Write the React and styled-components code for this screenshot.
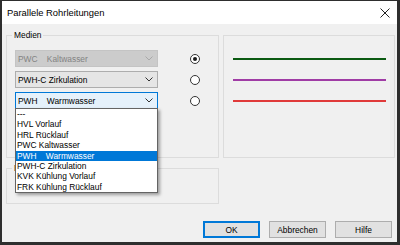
import React from 'react'
import styled, { createGlobalStyle } from 'styled-components'

const GlobalStyle = createGlobalStyle`
    html, body {
        margin:0;
        padding:0;
        background:#f0f0f0;
    }
    body {
        font-family:"Liberation Sans", Arial, sans-serif;
        font-size:8.4px;
        color:#000;
    }
`

const media = ['---', 'HVL Vorlauf', 'HRL Rücklauf', 'PWC Kaltwasser', 'PWH    Warmwasser', 'PWH-C Zirkulation', 'KVK Kühlung Vorlauf', 'FRK Kühlung Rücklauf']

const rows = [
    { label: 'PWC    Kaltwasser', state: 'disabled', checked: true, color: '#0b5a12' },
    { label: 'PWH-C Zirkulation', state: 'normal', checked: false, color: '#a03ca5' },
    { label: 'PWH    Warmwasser', state: 'focus', checked: false, color: '#e03a3a', open: true },
]

function Chevron({ color }) {
    return (
        <svg width="8" height="5" viewBox="0 0 8 5">
            <path d="M0.5 0.5 L4 4 L7.5 0.5" fill="none" stroke={color} strokeWidth="1" />
        </svg>
    )
}

function App() {
    return (
        <>
            <GlobalStyle />
            <Window>
                <TitleBar>
                    <Title>Parallele Rohrleitungen</Title>
                    <CloseBtn>
                        <svg width="10" height="10" viewBox="0 0 10 10">
                            <path d="M0.5 0.5 L9.5 9.5 M9.5 0.5 L0.5 9.5" stroke="#222" strokeWidth="1" />
                        </svg>
                    </CloseBtn>
                </TitleBar>
                <Body>
                    <TopRow>
                        <GroupBox>
                            <GroupLabel>Medien</GroupLabel>
                            <Rows>
                                {rows.map((r) => (
                                    <MediaRow key={r.label}>
                                        <ComboWrap>
                                            <Combo state={r.state}>
                                                <ComboText>{r.label}</ComboText>
                                                <Chevron color={r.state === 'disabled' ? '#a8a8a8' : '#333'} />
                                            </Combo>
                                            {r.open && (
                                                <DropList>
                                                    {media.map((m) => (
                                                        <DropItem key={m} selected={m.startsWith('PWH ')}>{m}</DropItem>
                                                    ))}
                                                </DropList>
                                            )}
                                        </ComboWrap>
                                        <Radio checked={r.checked} />
                                    </MediaRow>
                                ))}
                            </Rows>
                        </GroupBox>
                        <Preview>
                            <Rows>
                                {rows.map((r) => (
                                    <LineRow key={r.color}>
                                        <PipeLine color={r.color} />
                                    </LineRow>
                                ))}
                            </Rows>
                        </Preview>
                    </TopRow>
                    <SecondBox>
                        <GroupLabel>E</GroupLabel>
                    </SecondBox>
                    <Footer>
                        <Button primary>OK</Button>
                        <Button>Abbrechen</Button>
                        <Button>Hilfe</Button>
                    </Footer>
                </Body>
            </Window>
        </>
    )
}

const Window = styled.div`
    width:400px;
    height:245px;
    box-sizing:border-box;
    border-style:solid;
    border-color:#2e2e2e;
    border-width:1px 3px 3px 2px;
    background:#f0f0f0;
    display:flex;
    flex-direction:column;
`

const TitleBar = styled.div`
    height:23px;
    background:#fff;
    display:flex;
    align-items:center;
    justify-content:space-between;
    padding:0 5px 0 5px;
`

const Title = styled.div`
    font-size:9.4px;
    color:#000;
`

const CloseBtn = styled.div`
    width:10px;
    height:10px;
    display:flex;
    margin-right:2px;
`

const Body = styled.div`
    flex:1;
    padding:11px 2px 0 4px;
    display:flex;
    flex-direction:column;
`

const TopRow = styled.div`
    display:flex;
    gap:4px;
    height:123px;
`

const GroupBox = styled.div`
    position:relative;
    width:213px;
    box-sizing:border-box;
    border:1px solid #dcdcdc;
    padding:14px 0 0 8px;
`

const GroupLabel = styled.span`
    position:absolute;
    top:-6px;
    left:5px;
    padding:0 2px;
    background:#f0f0f0;
    line-height:11px;
    color:#000;
`

const Rows = styled.div`
    display:flex;
    flex-direction:column;
    gap:4px;
`

const MediaRow = styled.div`
    display:flex;
    align-items:center;
    gap:32px;
    height:17px;
`

const ComboWrap = styled.div`
    position:relative;
    width:143px;
    height:17px;
`

const comboColors = {
    disabled: { bg: '#cccccc', border: '#c4c4c4', text: '#838383' },
    normal: { bg: '#e5e5e5', border: '#adadad', text: '#000' },
    focus: { bg: '#e5f1fb', border: '#0078d7', text: '#000' },
}

const Combo = styled.div`
    height:100%;
    box-sizing:border-box;
    border:1px solid ${(p) => comboColors[p.state].border};
    background:${(p) => comboColors[p.state].bg};
    color:${(p) => comboColors[p.state].text};
    display:flex;
    align-items:center;
    justify-content:space-between;
    padding:0 4px 0 2px;
`

const ComboText = styled.span`
    white-space:pre;
`

const DropList = styled.div`
    position:absolute;
    z-index:5;
    top:16px;
    left:0;
    width:143px;
    box-sizing:border-box;
    border:1px solid #646464;
    background:#fff;
    box-shadow:2px 2px 3px rgba(0,0,0,0.35);
`

const DropItem = styled.div`
    height:10.4px;
    line-height:10.4px;
    padding-left:1px;
    white-space:pre;
    background:${(p) => (p.selected ? '#0078d7' : 'transparent')};
    color:${(p) => (p.selected ? '#fff' : '#000')};
`

const Radio = styled.div`
    width:10px;
    height:10px;
    box-sizing:border-box;
    border:1px solid #333;
    border-radius:50%;
    background:#fff;
    display:flex;
    align-items:center;
    justify-content:center;
    &::after {
        content:'';
        width:4px;
        height:4px;
        border-radius:50%;
        background:#1a1a1a;
        display:${(p) => (p.checked ? 'block' : 'none')};
    }
`

const Preview = styled.div`
    flex:1;
    box-sizing:border-box;
    border:1px solid #dcdcdc;
    padding:14px 8px 0 9px;
`

const LineRow = styled.div`
    height:17px;
    display:flex;
    align-items:center;
`

const PipeLine = styled.div`
    flex:1;
    height:2px;
    background:${(p) => p.color};
`

const SecondBox = styled.div`
    position:relative;
    width:213px;
    height:36px;
    box-sizing:border-box;
    border:1px solid #dcdcdc;
    margin-top:10px;
`

const Footer = styled.div`
    display:flex;
    justify-content:flex-end;
    gap:9px;
    margin-top:17px;
    padding-right:3px;
`

const Button = styled.div`
    width:57px;
    height:17px;
    box-sizing:border-box;
    border:1px solid ${(p) => (p.primary ? '#0078d7' : '#adadad')};
    box-shadow:${(p) => (p.primary ? 'inset 0 0 0 1px #0078d7' : 'none')};
    background:#e1e1e1;
    display:flex;
    align-items:center;
    justify-content:center;
`

export default App
